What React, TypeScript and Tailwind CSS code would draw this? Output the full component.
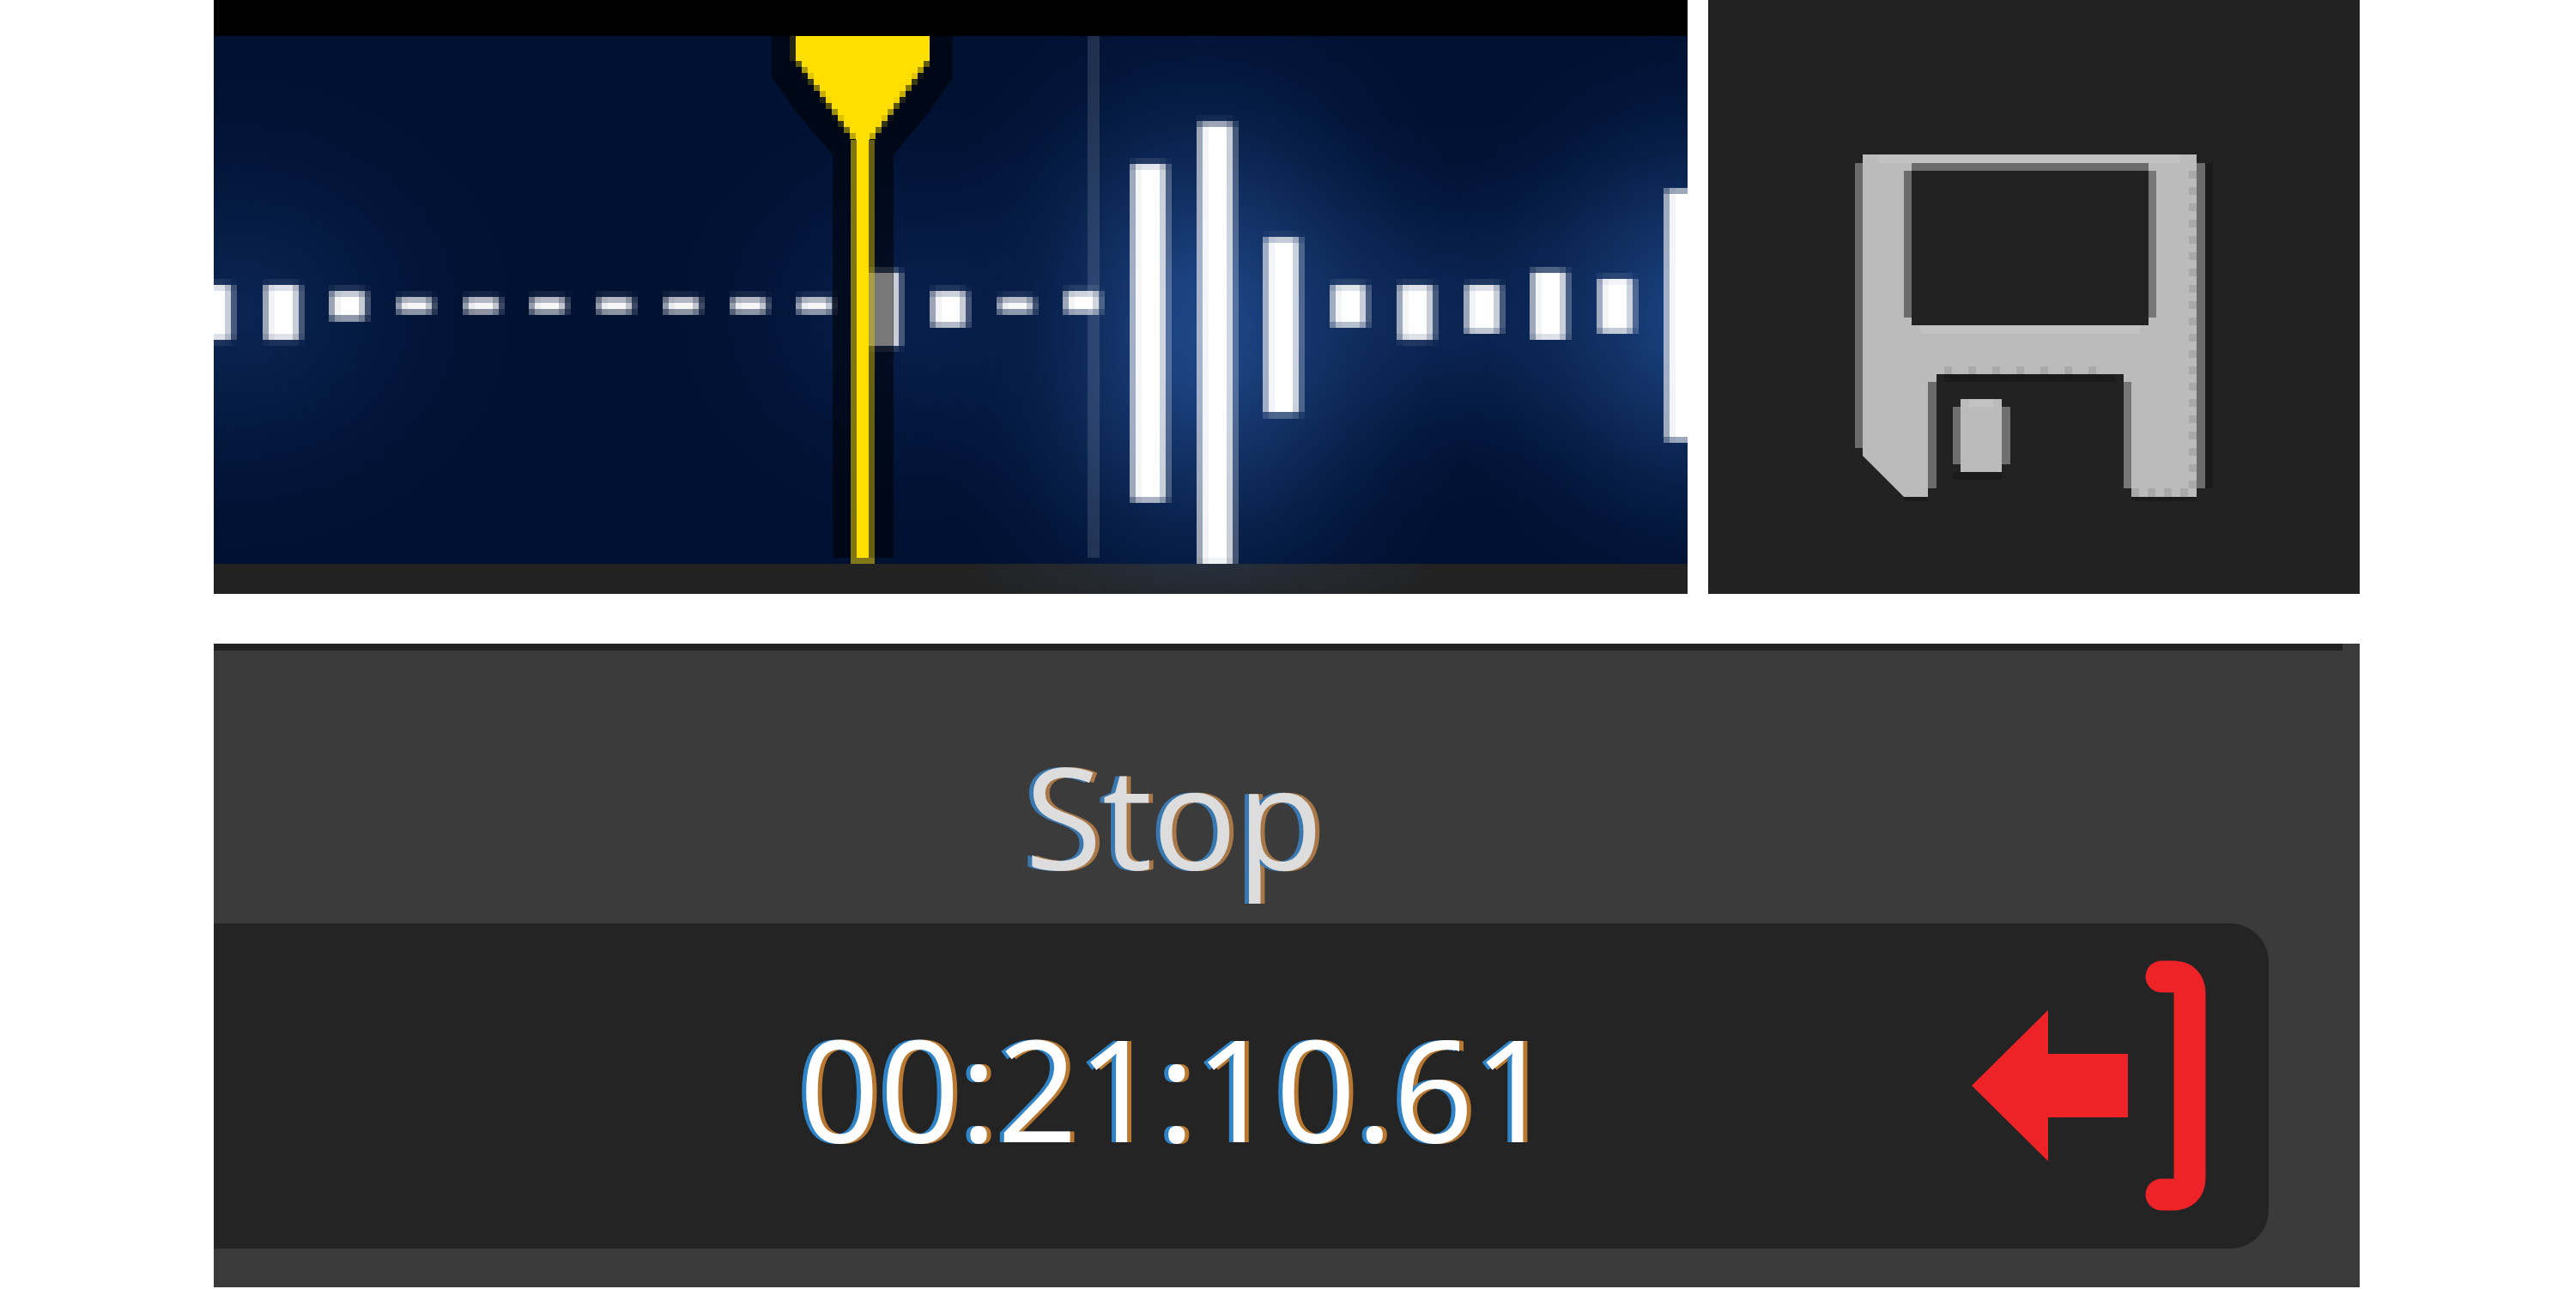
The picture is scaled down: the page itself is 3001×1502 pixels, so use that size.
import React from "react";

const CELL = 7;
const COLUMN_ALPHA = [0.6, 0.95, 1, 1, 1, 0.78, 0.25];

type Row = [top: number, bottom: number, alpha: number];

const DASH: Row[] = [[339, 346, 0.08], [346, 353, 0.7], [353, 360, 0.97], [360, 367, 0.55]];
const BLOCK: Row[] = [[325, 332, 0.08], [332, 339, 0.87], [339, 389, 1], [389, 396, 0.87], [396, 403, 0.08]];

const BARS: { x: number; rows: Row[] }[] = [
  { x: 227, rows: BLOCK },
  { x: 306, rows: BLOCK },
  { x: 383, rows: [[332, 339, 0.1], [339, 346, 0.78], [346, 367, 1], [367, 375, 0.55]] },
  { x: 461, rows: DASH },
  { x: 539, rows: DASH },
  { x: 616, rows: DASH },
  { x: 694, rows: DASH },
  { x: 772, rows: DASH },
  { x: 850, rows: DASH },
  { x: 927, rows: DASH },
  { x: 1005, rows: [[311, 318, 0.25], [318, 403, 1], [403, 410, 0.15]] },
  { x: 1083, rows: [[332, 339, 0.1], [339, 346, 0.8], [346, 375, 1], [375, 382, 0.7]] },
  { x: 1161, rows: DASH },
  { x: 1238, rows: [[332, 339, 0.1], [339, 346, 0.8], [346, 360, 1], [360, 367, 0.6]] },
  { x: 1316, rows: [[184, 191, 0.1], [191, 198, 0.88], [198, 579, 1], [579, 586, 0.65]] },
  { x: 1394, rows: [[134, 141, 0.05], [141, 148, 0.6], [148, 650, 1], [650, 657, 0.95]] },
  { x: 1471, rows: [[269, 276, 0.05], [276, 283, 0.75], [283, 480, 1], [480, 488, 0.25]] },
  { x: 1549, rows: [[325, 332, 0.1], [332, 339, 0.87], [339, 375, 1], [375, 382, 0.7]] },
  { x: 1627, rows: BLOCK },
  { x: 1705, rows: [[325, 332, 0.1], [332, 339, 0.87], [339, 382, 1], [382, 389, 0.75]] },
  { x: 1782, rows: [[311, 318, 0.28], [318, 389, 1], [389, 396, 0.87]] },
  { x: 1860, rows: [[318, 325, 0.1], [325, 332, 0.95], [332, 382, 1], [382, 389, 0.75]] },
  { x: 1938, rows: [[219, 226, 0.6], [226, 509, 1], [509, 516, 0.6]] },
];

function WaveBars() {
  return (
    <g fill="#ffffff" shapeRendering="crispEdges">
      {BARS.map((bar) =>
        bar.rows.map(([top, bottom, rowAlpha]) =>
          COLUMN_ALPHA.map((alpha, c) => (
            <rect
              key={`${bar.x}-${top}-${c}`}
              x={bar.x + c * CELL}
              y={top}
              width={CELL}
              height={bottom - top}
              opacity={alpha * rowAlpha}
            />
          )),
        ),
      )}
    </g>
  );
}

function Playhead() {
  const cells: React.ReactElement[] = [];
  for (let r = 0; r < 13; r++) {
    for (let c = 0; c < 10; c++) {
      let cover = 0;
      for (let s = 0; s < 4; s++) {
        const edge = 0.25 + (r + (s + 0.5) / 4) * 0.72;
        cover += Math.min(1, Math.max(0, c + 1 - edge)) / 4;
      }
      if (cover > 0.02) {
        cells.push(
          <rect key={`l${r}-${c}`} x={927 + c * 7} y={71 + r * 7} width={7} height={7} opacity={cover} />,
          <rect key={`r${r}-${c}`} x={1076 - c * 7} y={71 + r * 7} width={7} height={7} opacity={cover} />,
        );
      }
    }
  }
  return (
    <g>
      <path
        d="M899 42H1110V90L1083 130L1041 180V650H970V180L927 130L899 90Z"
        fill="#000000"
        fillOpacity="0.53"
      />
      <g fill="#ffdf00" shapeRendering="crispEdges">
        <rect x="920" y="42" width="7" height="29" opacity="0.15" />
        <rect x="927" y="42" width="156" height="29" />
        {cells}
        <rect x="997" y="71" width="16" height="92" />
        <rect x="998" y="163" width="14" height="487" />
        <rect x="991" y="163" width="7" height="487" opacity="0.5" />
        <rect x="1012" y="163" width="7" height="487" opacity="0.4" />
        <rect x="991" y="650" width="28" height="7" opacity="0.5" />
      </g>
    </g>
  );
}

function Glow({ id, color }: { id: string; color: string }) {
  return (
    <radialGradient id={id}>
      <stop offset="0" stopColor={color} stopOpacity="1" />
      <stop offset="0.15" stopColor={color} stopOpacity="0.92" />
      <stop offset="0.35" stopColor={color} stopOpacity="0.62" />
      <stop offset="0.6" stopColor={color} stopOpacity="0.27" />
      <stop offset="0.8" stopColor={color} stopOpacity="0.08" />
      <stop offset="1" stopColor={color} stopOpacity="0" />
    </radialGradient>
  );
}

function Waveform() {
  return (
    <svg
      viewBox="249 42 1717 615"
      preserveAspectRatio="none"
      className="block h-[615px] w-full bg-[#001132]"
      role="img"
      aria-label="Waveform"
    >
      <defs>
        <Glow id="glow-main" color="#1e4686" />
        <Glow id="glow-right" color="#1b4280" />
        <Glow id="glow-soft" color="#0a2350" />
        <Glow id="glow-mid" color="#081f4c" />
      </defs>
      <ellipse cx="1670" cy="365" rx="380" ry="230" fill="url(#glow-soft)" />
      <ellipse cx="1400" cy="385" rx="330" ry="410" fill="url(#glow-main)" />
      <ellipse cx="1985" cy="370" rx="320" ry="340" fill="url(#glow-right)" />
      <ellipse cx="275" cy="365" rx="340" ry="290" fill="url(#glow-soft)" />
      <ellipse cx="1070" cy="365" rx="300" ry="260" fill="url(#glow-mid)" />
      <rect x="1267" y="42" width="14" height="608" fill="#ffffff" opacity="0.12" />
      <WaveBars />
      <Playhead />
    </svg>
  );
}

const dots = (start: number, step: number, count: number) =>
  Array.from({ length: count }, (_, i) => start + i * step);

function SaveIcon() {
  return (
    <svg viewBox="0 0 420 404" className="h-[404px] w-[420px]" aria-hidden="true">
      <path
        fill="#bbbbbb"
        fillRule="evenodd"
        d="M10 0H399V399H323V256H96V265H86V399H58L10 351ZM67 10H58V199H352V10Z"
      />
      <path
        fill="#bbbbbb"
        d="M86 256H96V265H86ZM58 10H67V19H58ZM343 10H352V19H343ZM58 190H67V199H58ZM343 190H352V199H343ZM314 256H323V265H314Z"
      />
      <path fill="#c2c2c2" d="M29 0H380V10H29ZM77 199H333V209H77Z" />
      <g fill="#6b6b6b" shapeRendering="crispEdges">
        <rect x="1" y="10" width="9" height="332" />
        <rect x="399" y="10" width="10" height="379" />
        <rect x="67" y="10" width="276" height="9" />
        <rect x="58" y="19" width="9" height="171" />
        <rect x="343" y="19" width="9" height="171" fill="#777777" />
        <rect x="86" y="265" width="10" height="124" />
        <rect x="314" y="265" width="9" height="124" fill="#777777" />
      </g>
      <g fill="#a9a9a9" shapeRendering="crispEdges">
        {dots(19, 19, 20).map((y) => (
          <rect key={y} x="390" y={y} width="9" height="9" />
        ))}
        {dots(105, 28, 7).map((x) => (
          <rect key={x} x={x} y="247" width="9" height="9" />
        ))}
        {dots(323, 19, 4).map((x) => (
          <rect key={x} x={x} y="389" width="9" height="10" />
        ))}
      </g>
      <g fill="#1b1b1b" shapeRendering="crispEdges">
        <rect x="105" y="256" width="200" height="9" />
        <rect x="58" y="399" width="28" height="5" />
        <rect x="323" y="399" width="76" height="5" />
        <rect x="115" y="370" width="57" height="9" />
        <rect x="409" y="10" width="9" height="379" />
      </g>
      <g shapeRendering="crispEdges">
        <rect x="115" y="294" width="67" height="67" fill="#6f6f6f" />
        <rect x="124" y="285" width="48" height="85" fill="#bbbbbb" />
        <rect x="134" y="285" width="28" height="9" fill="#c2c2c2" />
      </g>
    </svg>
  );
}

function MarkOutIcon() {
  return (
    <svg viewBox="0 0 280 300" className="h-[300px] w-[280px]" aria-hidden="true">
      <path fill="#ed2328" d="M2 149L91 61V112H184V186H91V237Z" />
      <path
        d="M223 22H236Q256 22 256 42V256Q256 276 236 276H223"
        fill="none"
        stroke="#ed2328"
        strokeWidth="37"
        strokeLinecap="round"
      />
    </svg>
  );
}

export default function App() {
  return (
    <main className="bg-white pr-[252px] pl-[249px] font-['Open_Sans','Noto_Sans',sans-serif]">
      <div className="grid grid-cols-[1717fr_759fr] gap-6">
        <section className="min-w-0">
          <div className="h-[42px] bg-black" />
          <Waveform />
          <div className="h-[35px] bg-[#222222] bg-[radial-gradient(280px_60px_at_67%_0px,#26303e_0%,#222222_100%)]" />
        </section>
        <button type="button" aria-label="Save" className="flex items-start justify-center bg-[#222222] pt-[180px]">
          <SaveIcon />
        </button>
      </div>

      <section className="mt-[58px] flex flex-col bg-[#3b3b3b] pb-[45px]">
        <div className="mr-5 h-2 bg-[#222222]" />
        <label
          htmlFor="stop-time"
          className="block pt-[78px] pb-3 pl-[945px] text-[164px] leading-[228px] text-[#dddddd] [text-shadow:-5px_0_#3a78b0,5px_0_#a87848]"
        >
          Stop
        </label>
        <div className="mr-[106px] flex h-[379px] items-center rounded-r-[45px] bg-[#242424]">
          <input
            id="stop-time"
            type="text"
            defaultValue="00:21:10.61"
            className="mt-1 h-[228px] min-w-0 flex-1 bg-transparent pl-[682px] text-[164px] leading-[228px] text-white outline-none [text-shadow:-5px_0_#2f84c8,5px_0_#b87830]"
          />
          <button type="button" aria-label="Set stop to current position" className="mr-[68px]">
            <MarkOutIcon />
          </button>
        </div>
      </section>
    </main>
  );
}
